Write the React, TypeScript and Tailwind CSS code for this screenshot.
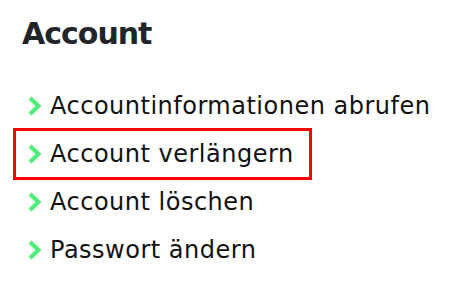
import React from "react";

const items = [
  "Accountinformationen abrufen",
  "Account verlängern",
  "Account löschen",
  "Passwort ändern",
];

function Chevron() {
  return (
    <svg width="13" height="20" viewBox="0 0 13 20" className="shrink-0">
      <polyline
        points="2,2 10.5,10 2,18"
        fill="none"
        stroke="#52ec78"
        strokeWidth="4.2"
        strokeLinejoin="miter"
        strokeLinecap="butt"
      />
    </svg>
  );
}

export default function App() {
  return (
    <div
      className="w-[461px] h-[286px] bg-white"
      style={{ fontFamily: '"DejaVu Sans", sans-serif' }}
    >
      <div className="pl-[22px] pt-[14px] h-[82px]">
        <h2 className="text-[30px] leading-[40px] font-bold tracking-[-1px] text-[#212529]">Account</h2>
      </div>
      <ul>
        {items.map((t, i) => (
          <li
            key={t}
            className={
              "ml-[15px] w-[295px] h-[48px] pl-[13px] flex items-center gap-[9px] text-[#111] text-[24px] tracking-[0.5px] whitespace-nowrap " +
              (i === 1 ? "outline-3 outline-solid outline-[#ff0000] -outline-offset-1" : "")
            }
          >
            <Chevron />
            <span>{t}</span>
          </li>
        ))}
      </ul>
    </div>
  );
}
